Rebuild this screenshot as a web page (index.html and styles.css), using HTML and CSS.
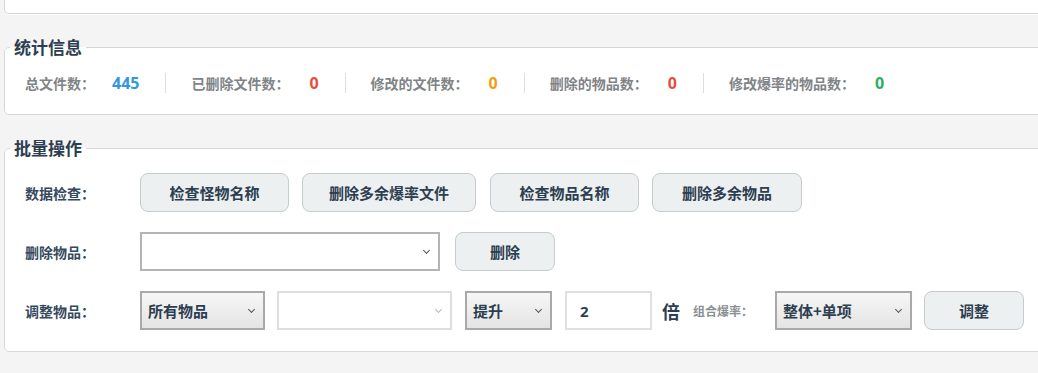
FILE: index.html
```html
<!DOCTYPE html>
<html lang="zh-CN">
<head>
<meta charset="utf-8">
<title>统计与批量操作</title>
<link rel="stylesheet" href="styles.css">
</head>
<body>
<div class="page">
  <div class="top-panel"></div>

  <fieldset class="panel">
    <legend class="legend">统计信息</legend>
    <div class="stats">
      <div class="stat"><span class="stat-label">总文件数：</span><span class="stat-value blue">445</span></div>
      <div class="stat"><span class="stat-label">已删除文件数：</span><span class="stat-value red">0</span></div>
      <div class="stat"><span class="stat-label">修改的文件数：</span><span class="stat-value orange">0</span></div>
      <div class="stat"><span class="stat-label">删除的物品数：</span><span class="stat-value red">0</span></div>
      <div class="stat"><span class="stat-label">修改爆率的物品数：</span><span class="stat-value green">0</span></div>
    </div>
  </fieldset>

  <fieldset class="panel">
    <legend class="legend">批量操作</legend>
    <div class="ops">
      <div class="row">
        <span class="row-label">数据检查：</span>
        <div class="controls">
          <button class="btn w-149">检查怪物名称</button>
          <button class="btn w-175">删除多余爆率文件</button>
          <button class="btn w-149 shift">检查物品名称</button>
          <button class="btn w-150">删除多余物品</button>
        </div>
      </div>
      <div class="row">
        <span class="row-label">删除物品：</span>
        <div class="controls">
          <span class="sel sel-item"><select class="select white"><option></option></select></span>
          <button class="btn w-100">删除</button>
        </div>
      </div>
      <div class="row">
        <span class="row-label">调整物品：</span>
        <div class="controls">
          <span class="sel sel-scope"><select class="select gray"><option>所有物品</option></select></span>
          <span class="sel sel-sub light"><select class="select white faint"><option></option></select></span>
          <span class="sel sel-mode"><select class="select gray"><option>提升</option></select></span>
          <input class="num" type="text" value="2">
          <span class="times">倍</span>
          <span class="combo-label">组合爆率：</span>
          <span class="sel sel-combo"><select class="select gray"><option>整体+单项</option></select></span>
          <button class="btn w-100 btn-adjust">调整</button>
        </div>
      </div>
    </div>
  </fieldset>
</div>
</body>
</html>
```

FILE: styles.css
```css
html, body {
  margin: 0;
  padding: 0;
  background: #f4f4f4;
  overflow: hidden;
  font-family: "Noto Sans", "Noto Sans CJK SC", sans-serif;
}

.page {
  padding-left: 4px;
  margin-right: -8px;
}

.top-panel {
  height: 13px;
  background: #fff;
  border: 1px solid #d4d8da;
  border-top: none;
  border-radius: 0 0 0 5px;
  box-shadow: 0 1px 0 #fbfbfb;
}

.panel {
  margin: 23px 0 0;
  padding: 0;
  min-width: 0;
  border: 1px solid #d4d8da;
  border-radius: 5px;
  background: #fff;
}

.legend {
  margin-left: 5px;
  padding: 0 4px;
  font-family: "Noto Sans CJK SC", sans-serif;
  font-size: 17px;
  font-weight: 700;
  line-height: 20px;
  color: #2c3e50;
}

/* stats */
.stats {
  display: flex;
  align-items: center;
  padding: 16px 20px 21px;
}

.stat {
  display: flex;
  align-items: center;
  height: 20px;
  padding: 0 26px 0 25px;
  border-left: 1px solid #dcdfe2;
}

.stat:first-child {
  padding-left: 0;
  border-left: none;
}

.stat-label {
  font-family: "Noto Sans CJK SC", sans-serif;
  font-size: 14px;
  font-weight: 700;
  color: #7f8487;
  margin-right: 20px;
}

.stat:first-child .stat-label {
  margin-right: 17px;
}

.stat-value {
  font-family: "Open Sans", "Noto Sans", sans-serif;
  font-size: 16px;
  font-weight: 700;
}

.blue { color: #3498db; }
.red { color: #e74c3c; }
.orange { color: #f39c12; }
.green { color: #27ae60; }

/* operations */
.ops {
  display: flex;
  flex-direction: column;
  gap: 20px;
  padding: 15px 20px 21px;
}

.row {
  display: flex;
  align-items: center;
}

.row-label {
  width: 115px;
  flex: none;
  font-family: "Noto Sans CJK SC", sans-serif;
  font-size: 14px;
  font-weight: 700;
  color: #34495e;
}

.controls {
  display: flex;
  align-items: center;
  gap: 13px;
}

.btn {
  height: 39px;
  padding: 0;
  border: 1px solid #c6cbce;
  border-radius: 8px;
  background: #ecf0f1;
  font-family: "Noto Sans CJK SC", sans-serif;
  font-size: 15px;
  font-weight: 700;
  color: #2c3e50;
}

.w-100 { width: 100px; }
.w-149 { width: 149px; }
.w-150 { width: 150px; }
.w-175 { width: 174px; }

.shift { margin-left: 1px; }

.btn-adjust { margin-left: -1px; }

.sel {
  position: relative;
  display: block;
  height: 39px;
}

.sel::after {
  content: "";
  position: absolute;
  right: 11px;
  top: 16px;
  width: 4px;
  height: 4px;
  border-right: 1.3px solid #555;
  border-bottom: 1.3px solid #555;
  transform: rotate(45deg);
}

.sel.light::after {
  border-color: #b8b8b8;
}

.select {
  appearance: none;
  -webkit-appearance: none;
  width: 100%;
  height: 39px;
  margin: 0;
  padding: 0 20px 0 6px;
  border: 2px solid #b4b4b4;
  border-radius: 0;
  font-family: "Noto Sans CJK SC", sans-serif;
  font-size: 15px;
  font-weight: 700;
  color: #2c3e50;
  outline: none;
}

.select.white {
  background: #fff;
}

.select.faint {
  border-color: #dcdfe1;
}

.select.gray {
  background: linear-gradient(#f6f6f6, #e4e4e4);
  border-color: #a9a9a9;
}

.sel-item { width: 300px; margin-right: 2px; }
.sel-scope { width: 125px; margin-right: -1px; }
.sel-sub { width: 175px; }
.sel-mode { width: 87px; }
.sel-combo { width: 137px; margin-left: 9px; }

.num {
  box-sizing: border-box;
  width: 87px;
  height: 39px;
  margin: 0;
  padding: 0 13px;
  border: 2px solid #dde1e3;
  font-family: "Open Sans", "Noto Sans", sans-serif;
  font-size: 15px;
  font-weight: 700;
  color: #2c3e50;
  outline: none;
}

.times {
  margin-left: -3px;
  font-family: "Noto Sans CJK SC", sans-serif;
  font-size: 18px;
  font-weight: 700;
  color: #2c3e50;
}

.combo-label {
  font-family: "Noto Sans CJK SC", sans-serif;
  font-size: 12px;
  font-weight: 700;
  color: #8a8f92;
}
```
